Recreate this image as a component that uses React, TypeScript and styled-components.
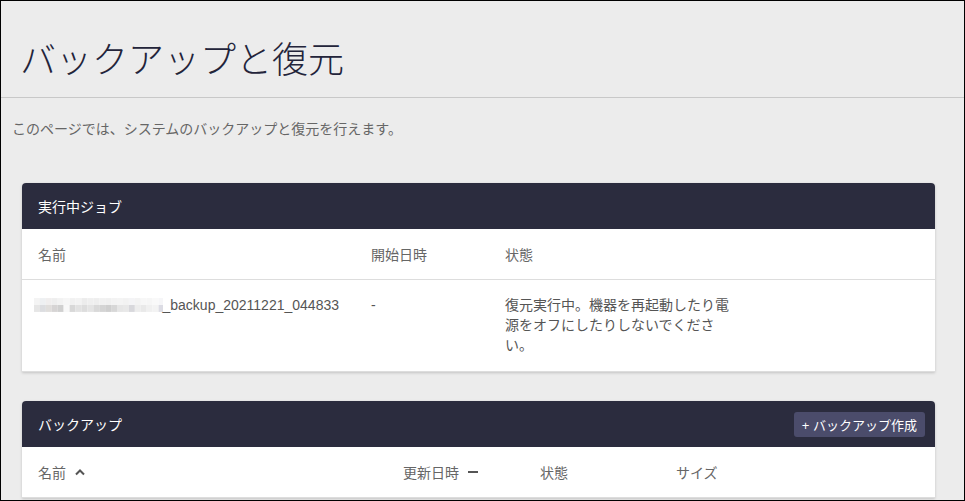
import styled, { createGlobalStyle } from "styled-components";

const GlobalStyle = createGlobalStyle`
  html, body {
    margin: 0;
    padding: 0;
    background: #ececec;
  }
  body {
    font-family: "Liberation Sans", "Noto Sans CJK JP", sans-serif;
  }
`;

const Frame = styled.div`
  box-sizing: border-box;
  width: 100vw;
  height: 100vh;
  border: 1px solid #000;
  overflow: hidden;
  background: #ececec;
`;

const PageHeader = styled.header`
  height: 97px;
  box-sizing: border-box;
  padding: 34px 0 0 19px;
  border-bottom: 1px solid #c8c8c8;
`;

const Title = styled.h1`
  margin: 0;
  font-family: "Noto Sans CJK JP", sans-serif;
  font-size: 36px;
  font-weight: 300;
  line-height: 44px;
  color: #23243a;
`;

const Description = styled.p`
  margin: 0;
  padding: 20px 0 0 11px;
  font-family: "Noto Sans CJK JP", sans-serif;
  font-size: 14px;
  line-height: 20px;
  color: #666;
`;

const Content = styled.main`
  display: flex;
  flex-direction: column;
  gap: 29px;
  padding: 45px 29px 0 21px;
`;

const Card = styled.section`
  background: #fff;
  border-radius: 4px 4px 0 0;
  box-shadow: 0 1px 3px rgba(0, 0, 0, 0.18);
`;

const CardHeader = styled.div`
  display: flex;
  align-items: center;
  justify-content: space-between;
  height: 46px;
  padding: 0 10px 0 16px;
  background: #2b2c3e;
  border-radius: 4px 4px 0 0;
`;

const CardTitle = styled.h2`
  margin: 0;
  font-family: "Noto Sans CJK JP", sans-serif;
  font-size: 14px;
  font-weight: 400;
  color: #fff;
`;

const CreateButton = styled.button`
  height: 25px;
  padding: 0 8px;
  border: none;
  border-radius: 3px;
  background: #4b4c6b;
  color: #fff;
  font-family: "Liberation Sans", "Noto Sans CJK JP", sans-serif;
  font-size: 13px;
  cursor: pointer;
`;

const Row = styled.div<{ $cols: string; $head?: boolean }>`
  display: grid;
  grid-template-columns: ${(p) => p.$cols};
  align-items: ${(p) => (p.$head ? "center" : "start")};
  min-height: ${(p) => (p.$head ? "50px" : "auto")};
  padding: ${(p) => (p.$head ? "0" : "15px 0 16px")};
  border-bottom: 1px solid #ddd;
`;

const HeadCell = styled.div`
  display: flex;
  align-items: center;
  gap: 8px;
  padding: 0 16px;
  font-family: "Noto Sans CJK JP", sans-serif;
  font-size: 14px;
  color: #666;
`;

const Cell = styled.div`
  padding: 0 16px;
  font-size: 14px;
  line-height: 20px;
  color: #555;
`;

const NameCell = styled(Cell)`
  display: flex;
  align-items: center;
  padding-left: 12px;
`;

const mosaic = [
  ["#f4f4f4", "#eef0f2", "#f0eeee", "#eeeeee", "#f2f2f2", "#f6f6f6", "#f1f1f1", "#f3f3f3", "#ececec", "#efefef", "#eeeeee", "#f1f1f1", "#f0f0f0", "#f3f3f3", "#f4f4f4", "#f2f2f2", "#f4f4f6", "#f3f3f3", "#f7f7f7", "#f6f6f6", "#f9f9f9", "#f6f6f8"],
  ["#e6e6e6", "#dcdde0", "#e0dedc", "#d6d4d4", "#d0d0d0", "#f8f8f8", "#d8d8d8", "#e2e2e2", "#dddddd", "#e4e4e4", "#d9d9d9", "#d4d4d4", "#cfcfcf", "#d7d7d7", "#e6e6e6", "#e8e8e8", "#d8d8dc", "#ededed", "#e9e9e9", "#f0f0f0", "#f3f3f3", "#dcdce4"],
];

const Mosaic = () => (
  <svg width="130" height="14" viewBox="0 0 130 14">
    {mosaic.map((row, r) =>
      row.map((c, i) => (
        <rect key={`${r}-${i}`} x={i * 6} y={r * 7} width="6" height="7" fill={c} />
      ))
    )}
  </svg>
);

const ChevronUp = () => (
  <svg width="12" height="10" viewBox="0 0 12 10">
    <path d="M2 7.5 L6 3.5 L10 7.5" fill="none" stroke="#555" strokeWidth="2" />
  </svg>
);

const Dash = () => (
  <svg width="12" height="10" viewBox="0 0 12 10">
    <rect x="1" y="4" width="10" height="2" fill="#555" />
  </svg>
);

const jobCols = "333px 134px 260px 1fr";
const backupCols = "365px 137px 136px 1fr";

const App = () => (
  <Frame>
    <GlobalStyle />
    <PageHeader>
      <Title>バックアップと復元</Title>
    </PageHeader>
    <Description>このページでは、システムのバックアップと復元を行えます。</Description>

    <Content>
      <Card>
        <CardHeader>
          <CardTitle>実行中ジョブ</CardTitle>
        </CardHeader>
        <Row $cols={jobCols} $head>
          <HeadCell>名前</HeadCell>
          <HeadCell>開始日時</HeadCell>
          <HeadCell>状態</HeadCell>
          <HeadCell />
        </Row>
        <Row $cols={jobCols}>
          <NameCell>
            <Mosaic />
            <span>_backup_20211221_044833</span>
          </NameCell>
          <Cell>-</Cell>
          <Cell>復元実行中。機器を再起動したり電源をオフにしたりしないでください。</Cell>
          <Cell />
        </Row>
      </Card>

      <Card>
        <CardHeader>
          <CardTitle>バックアップ</CardTitle>
          <CreateButton>+ バックアップ作成</CreateButton>
        </CardHeader>
        <Row $cols={backupCols} $head>
          <HeadCell>
            名前 <ChevronUp />
          </HeadCell>
          <HeadCell>
            更新日時 <Dash />
          </HeadCell>
          <HeadCell>状態</HeadCell>
          <HeadCell>サイズ</HeadCell>
        </Row>
      </Card>
    </Content>
  </Frame>
);

export default App;
